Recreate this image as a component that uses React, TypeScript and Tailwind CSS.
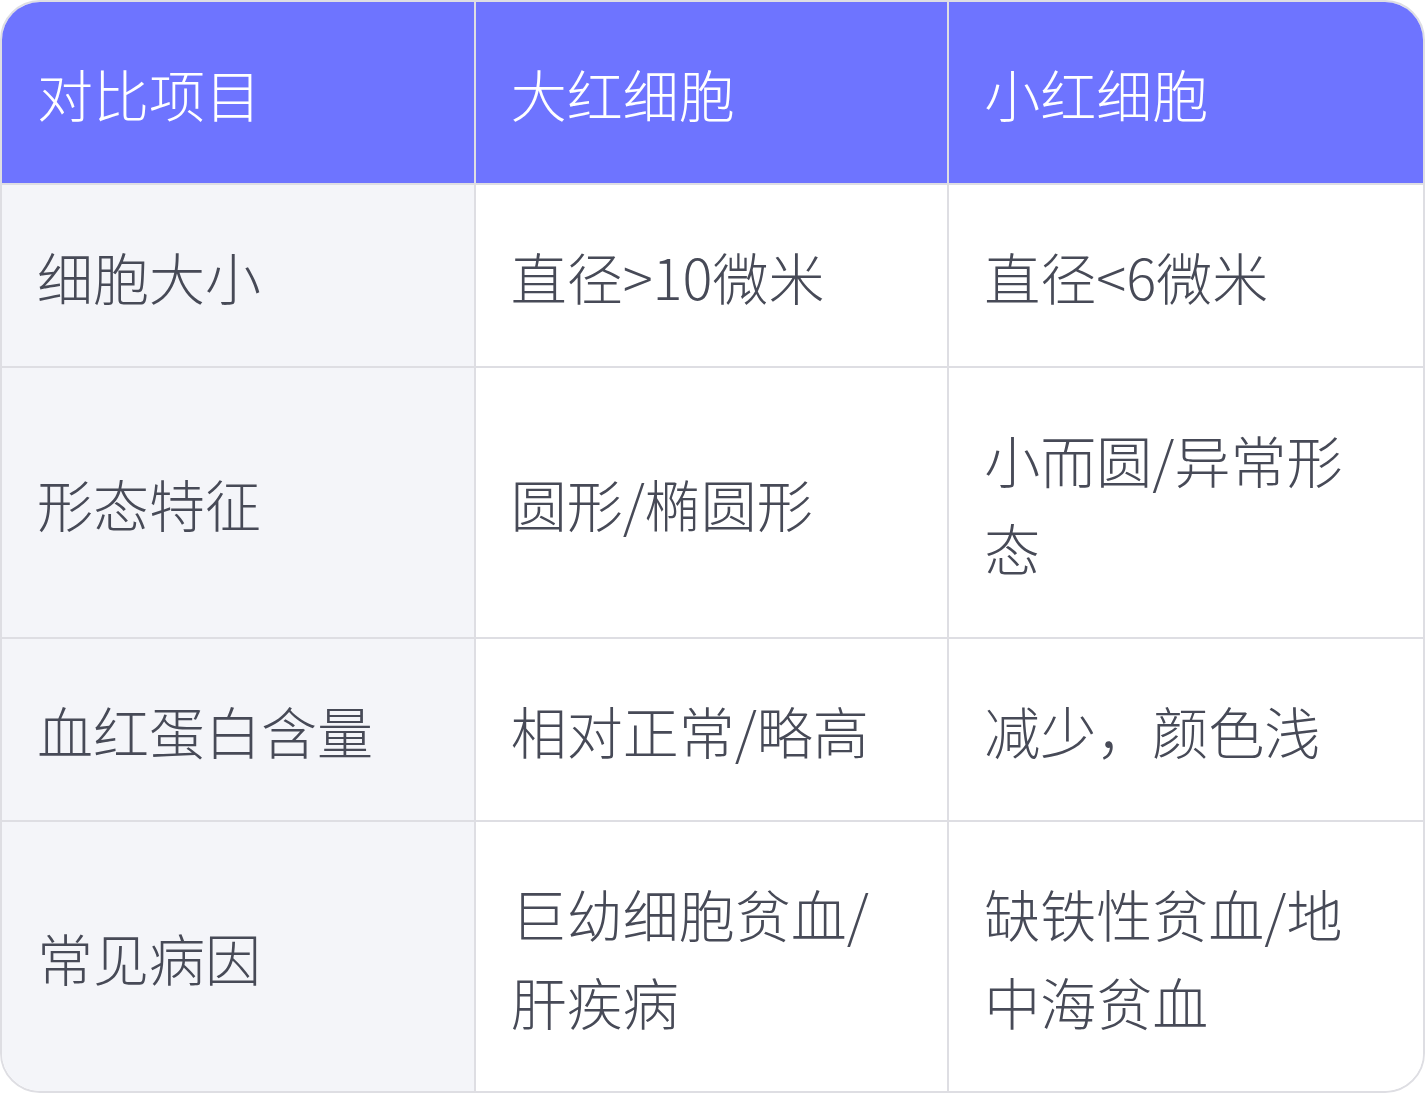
const HEADERS = ["对比项目", "大红细胞", "小红细胞"];

const ROWS: string[][] = [
  ["细胞大小", "直径>10微米", "直径<6微米"],
  ["形态特征", "圆形/椭圆形", "小而圆/异常形态"],
  ["血红蛋白含量", "相对正常/略高", "减少，颜色浅"],
  ["常见病因", "巨幼细胞贫血/肝疾病", "缺铁性贫血/地中海贫血"],
];

export default function App() {
  return (
    <div
      className="w-[1425px] bg-white"
      style={{ fontFamily: '"Noto Sans CJK SC", "Noto Sans", sans-serif' }}
    >
      <div className="overflow-hidden rounded-[40px] border-2 border-[#dedee3]">
        <div className="grid grid-cols-3 bg-[#6e74ff]">
          {HEADERS.map((h, i) => (
            <div
              key={h}
              className={
                "flex items-center px-[35px] py-[46.5px] text-[56px] font-light leading-[88px] text-white border-b-2 border-[#dedee3]" +
                (i < 2 ? " border-r-2" : "")
              }
            >
              {h}
            </div>
          ))}
        </div>
        {ROWS.map((row, r) => (
          <div key={r} className="grid grid-cols-3">
            {row.map((cell, c) => (
              <div
                key={c}
                className={
                  "flex items-center px-[35px] py-[46.5px] text-[56px] font-light leading-[88px] text-[#474a57] border-[#dedee3]" +
                  (c === 0 ? " bg-[#f4f5f9]" : " bg-white") +
                  (c < 2 ? " border-r-2" : "") +
                  (r < ROWS.length - 1 ? " border-b-2" : "")
                }
              >
                <span>{cell}</span>
              </div>
            ))}
          </div>
        ))}
      </div>
    </div>
  );
}
